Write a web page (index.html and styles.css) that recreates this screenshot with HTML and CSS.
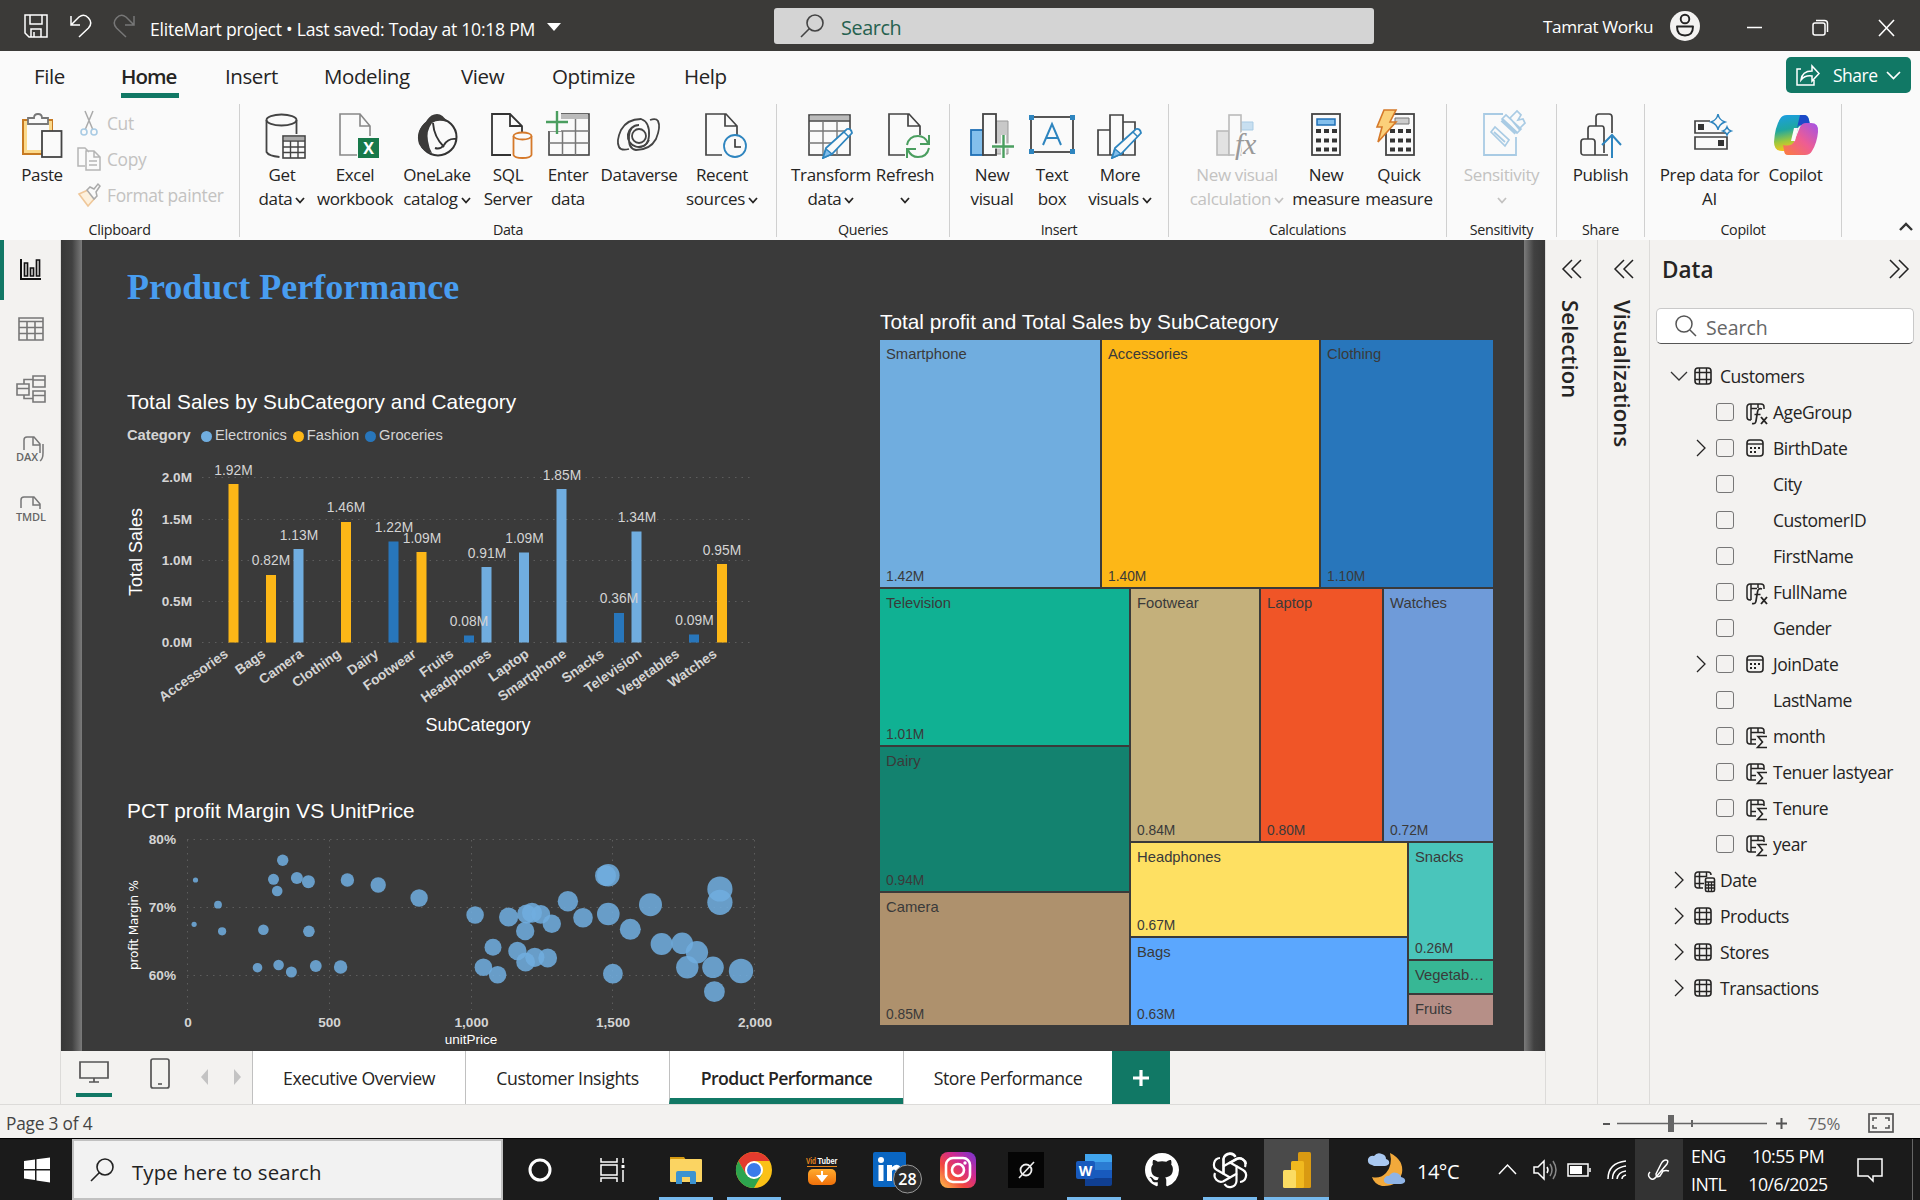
FILE: index.html
```html
<!DOCTYPE html>
<html lang="en">
<head>
<meta charset="utf-8">
<title>EliteMart project</title>
<link rel="stylesheet" href="styles.css">
</head>
<body>
<svg class="defs" width="0" height="0">
  <defs>
    <symbol id="chev" viewBox="0 0 10 7"><path d="M1 1l4 4.5L9 1" fill="none" stroke="currentColor" stroke-width="1.8"/></symbol>
    <symbol id="table" viewBox="0 0 18 18"><rect x="1" y="1" width="16" height="16" rx="3" fill="none" stroke="currentColor" stroke-width="1.6"/><path d="M5.5 1v16M12.5 1v16M1 5.5h16M1 12.5h16" fill="none" stroke="currentColor" stroke-width="1.4"/></symbol>
    <symbol id="right" viewBox="0 0 10 18"><path d="M1 1l8 8-8 8" fill="none" stroke="currentColor" stroke-width="1.3"/></symbol>
    <symbol id="cal" viewBox="0 0 18 18"><rect x="1" y="1" width="16" height="16" rx="3" fill="none" stroke="currentColor" stroke-width="1.6"/><path d="M1 5h16" stroke="currentColor" stroke-width="1.4"/><path d="M4 9h2M8 9h2M12 9h2M4 13h2M8 13h2" stroke="currentColor" stroke-width="2"/></symbol>
    <symbol id="calc" viewBox="0 0 22 22"><path d="M5 17H4a3 3 0 0 1-3-3V4a3 3 0 0 1 3-3h11a3 3 0 0 1 3 3v2M5 1v16M5 5.500h6M12 1v4" fill="none" stroke="currentColor" stroke-width="1.5"/><path d="M16 6q-4-1.500-4.500 3l-1.500 9q-.5 3.500-4 2.500M8.500 11.500h6" fill="none" stroke="currentColor" stroke-width="1.700"/><path d="M15 14l6 7M21 14l-6 7" stroke="currentColor" stroke-width="1.900"/></symbol>
    <symbol id="sigma" viewBox="0 0 22 22"><path d="M10 17H4a3 3 0 0 1-3-3V4a3 3 0 0 1 3-3h11a3 3 0 0 1 3 3v3M5 1v16M5 5.500h13M12 1v4M5 12.500h5" fill="none" stroke="currentColor" stroke-width="1.5"/><path d="M21 9.500H12l4.500 5.500-5 5.500H21" fill="none" stroke="currentColor" stroke-width="1.6"/></symbol>
    <symbol id="datecalc" viewBox="0 0 22 22"><path d="M9 17H4a3 3 0 0 1-3-3V4a3 3 0 0 1 3-3h10a3 3 0 0 1 3 3M5.500 1v16M12.500 1v5M1 5.500h12M1 12.500h9" fill="none" stroke="currentColor" stroke-width="1.5"/><rect x="11.500" y="7" width="9" height="13.500" rx="1.500" fill="none" stroke="currentColor" stroke-width="1.600"/><path d="M11 11h10M11 14h10M11 17h10M14.500 11v9M17.500 11v9" stroke="currentColor" stroke-width="1.300"/></symbol>
    <symbol id="pencil" viewBox="0 0 32 32"><path d="M1 31l3-10L25 2q4-1 5 4L10 27z" fill="#fafafa" stroke="#2e85bf" stroke-width="1.800"/><path d="M1 31l3-9 6 5z" fill="#83bfec" stroke="#2e85bf" stroke-width="1.500"/><path d="M22 5l5 5" stroke="#2e85bf" stroke-width="1.500"/></symbol>
    <symbol id="mag" viewBox="0 0 24 24"><circle cx="15" cy="9" r="8" fill="none" stroke="currentColor" stroke-width="1.600"/><path d="M9.500 14.500L1 23" stroke="currentColor" stroke-width="1.600"/></symbol>
    <linearGradient id="cpA" x1="0" y1="0" x2=".2" y2="1"><stop offset="0" stop-color="#1b9de8"/><stop offset=".45" stop-color="#1fa7a0"/><stop offset=".75" stop-color="#9cc83e"/><stop offset="1" stop-color="#f3c51d"/></linearGradient>
    <linearGradient id="cpB" x1="1" y1="0" x2="0" y2="1"><stop offset="0" stop-color="#a152e8"/><stop offset=".5" stop-color="#ee5d93"/><stop offset="1" stop-color="#fb7d3c"/></linearGradient>
    <linearGradient id="ig" x1="0" y1="1" x2="1" y2="0"><stop offset="0" stop-color="#fdc44a"/><stop offset=".35" stop-color="#f3473f"/><stop offset=".65" stop-color="#cf2a92"/><stop offset="1" stop-color="#7136d6"/></linearGradient>
    <linearGradient id="vt" x1="0" y1="0" x2="0" y2="1"><stop offset="0" stop-color="#ffab2e"/><stop offset="1" stop-color="#f0700a"/></linearGradient>
  </defs>
</svg>

<header class="titlebar">
  <svg class="save" width="24" height="24" viewBox="0 0 24 24"><path d="M1 1h22v22H5l-4-4zM6 1v9h12V1M7 23v-8h10v8M10 18v5" fill="none" stroke="#fff" stroke-width="1.500"/></svg>
  <svg class="undo" width="21" height="24" viewBox="0 0 21 24"><path d="M1 2v9h9M1 11L9 3q5-4 9.500 1t0 10L9 23" fill="none" stroke="#fff" stroke-width="1.500"/></svg>
  <svg class="redo" width="21" height="24" viewBox="0 0 21 24"><path d="M20 2v9h-9M20 11L12 3Q7-1 2.500 4t0 10L12 23" fill="none" stroke="#777" stroke-width="1.500"/></svg>
  <span class="doc">EliteMart project • Last saved: Today at 10:18 PM</span>
  <i class="caret"></i>
  <div class="top-search"><svg width="24" height="24"><use href="#mag"/></svg><span>Search</span></div>
  <span class="user">Tamrat Worku</span>
  <svg class="avatar" width="30" height="30" viewBox="0 0 30 30"><circle cx="15" cy="15" r="15" fill="#f3f2f1"/><circle cx="15" cy="8" r="4.300" fill="none" stroke="#222" stroke-width="1.900"/><path d="M7 15.500h16q0 9-8 9t-8-9z" fill="none" stroke="#222" stroke-width="1.900" stroke-linejoin="round"/></svg>
  <svg class="winbtns" width="150" height="20" viewBox="0 0 150 20"><path d="M1 9.500h15M133 2l15 16M148 2l-15 16" stroke="#fff" stroke-width="1.600"/><rect x="67" y="5" width="12" height="12" rx="2" fill="none" stroke="#fff" stroke-width="1.500"/><path d="M70 2.500h8.500q3 0 3 3V14" fill="none" stroke="#fff" stroke-width="1.500"/></svg>
</header>

<nav class="menu">
  <span class="m1">File</span><span class="m2 on">Home</span><span class="m3">Insert</span><span class="m4">Modeling</span><span class="m5">View</span><span class="m6">Optimize</span><span class="m7">Help</span>
  <button class="share"><svg width="25" height="22" viewBox="0 0 25 22"><path d="M5 5H1v16h17v-5M5 16q1-9 11-9V2l7 7.500-7 7.500v-5Q9 11 5 16z" fill="none" stroke="#fff" stroke-width="1.500"/></svg><span>Share</span><svg width="15" height="9" viewBox="0 0 15 9"><path d="M1 1l6.500 6.500L14 1" fill="none" stroke="#fff" stroke-width="1.700"/></svg></button>
</nav>

<section class="ribbon">
  <div class="group g-clip">
    <div class="tools">
      <div class="tool"><svg width="42" height="48" viewBox="0 0 42 48"><rect x="2" y="9" width="29" height="34" fill="#fafafa" stroke="#c77a22" stroke-width="2"/><rect x="4.500" y="11.500" width="25" height="29" fill="none" stroke="#fbd98b" stroke-width="3"/><path d="M7 13V7h6q0-4 4-4t4 4h6v6z" fill="#fafafa" stroke="#777" stroke-width="1.800"/><rect x="21" y="20" width="19.500" height="26" fill="#fafafa" stroke="#444" stroke-width="1.800"/></svg><span>Paste</span></div>
      <div class="mini">
        <div><svg width="24" height="26" viewBox="0 0 24 26"><path d="M8 1l8 19M16 1L8 20" stroke="#aaa" stroke-width="1.500"/><circle cx="7" cy="22" r="3" fill="none" stroke="#a9cbe4" stroke-width="1.600"/><circle cx="17" cy="22" r="3" fill="none" stroke="#a9cbe4" stroke-width="1.600"/></svg>Cut</div>
        <div><svg width="24" height="26" viewBox="0 0 24 26"><path d="M8 20H1V2h7l4 4M9 5h8l6 6v13H9zM17 5v6h6M12 15h8M12 19h8" fill="none" stroke="#b5b5b5" stroke-width="1.500"/></svg>Copy</div>
        <div><svg width="24" height="26" viewBox="0 0 24 26"><path d="M2 12l9-4 7 8-7 8z" fill="#fdf0dc" stroke="#efc79a" stroke-width="1.600"/><path d="M10 8l3-3 4 2 4-5 2 2-4 6 1 4-3 3z" fill="#fafafa" stroke="#aaa" stroke-width="1.500"/></svg>Format painter</div>
      </div>
    </div>
    <b>Clipboard</b>
  </div>
  <div class="group g-data">
    <div class="tools">
      <div class="tool nudge"><svg width="42" height="48" viewBox="0 0 42 48"><ellipse cx="16.500" cy="9" rx="15" ry="5.500" fill="none" stroke="#444" stroke-width="1.800"/><path d="M1.500 9v32q2 4 13 5M31.500 9v14" fill="none" stroke="#444" stroke-width="1.800"/><rect x="18" y="25" width="22" height="22" fill="#fafafa" stroke="#444" stroke-width="1.600"/><path d="M19 27.500h20" stroke="#aaa" stroke-width="3"/><path d="M18 30h22M18 36h22M18 41.500h22M25.500 30v17M33 30v17" stroke="#444" stroke-width="1.400"/></svg><span>Get</span><span>data <svg class="dn"><use href="#chev"/></svg></span></div>
      <div class="tool nudge"><svg width="42" height="48" viewBox="0 0 42 48"><path d="M19 44H2V3h20l10 12v10M22 3v12h10" fill="none" stroke="#888" stroke-width="1.600"/><rect x="20" y="27" width="21" height="20" fill="#17794a"/><text x="30.500" y="42.500" text-anchor="middle" font-family="Open Sans" font-weight="700" font-size="16" fill="#fff">X</text></svg><span>Excel</span><span>workbook</span></div>
      <div class="tool"><svg width="42" height="48" viewBox="0 0 42 48"><circle cx="22" cy="26" r="18.500" fill="#fafafa" stroke="#333" stroke-width="2"/><path d="M11 9Q15 3 21 3t10 8q-9-3-15 1-6 8-4 18 1 7 4 12Q7 41 3 33-1 20 10 11z" fill="#3b3a39"/><path d="M17 12q1 14 11 24M19 37q5 2 9-3 4-7 12-6" fill="none" stroke="#333" stroke-width="1.900"/></svg><span>OneLake</span><span>catalog <svg class="dn"><use href="#chev"/></svg></span></div>
      <div class="tool nudge"><svg width="42" height="48" viewBox="0 0 42 48"><path d="M20 44H1V3h18l12 12v6M19 3v12h12" fill="none" stroke="#333" stroke-width="1.800"/><path d="M22.500 25v19q1 3 9 3t9-3V25" fill="#fafafa" stroke="#d5792a" stroke-width="1.800"/><ellipse cx="31.500" cy="25" rx="9" ry="3.500" fill="#fafafa" stroke="#d5792a" stroke-width="1.800"/></svg><span>SQL</span><span>Server</span></div>
      <div class="tool"><svg width="44" height="48" viewBox="0 0 44 48"><rect x="3" y="3" width="40" height="41" fill="none" stroke="#444" stroke-width="1.600"/><path d="M4 5.500h38" stroke="#bbb" stroke-width="5"/><path d="M3 20h40M3 32h40M16.500 20v24M29.500 8v36" stroke="#777" stroke-width="1.500"/><path d="M0 2h15v18H0z" fill="#fafafa"/><path d="M11 0v23M0 11h22" stroke="#4a9e5f" stroke-width="2.400"/></svg><span>Enter</span><span>data</span></div>
      <div class="tool"><svg width="44" height="48" viewBox="0 0 44 48"><g fill="none" stroke="#444" stroke-width="1.800"><path d="M22 14a11 11 0 1 0 10 15M22 14q-9 0-10 11-1 13 7 14 14 0 20-11 5-12 2-18-2-3-8-1"/><path d="M22 36q9 0 10-11 1-14-8-17-14 0-20 11-5 11-2 17 2 4 10 2"/><circle cx="22" cy="25" r="7"/></g></svg><span>Dataverse</span></div>
      <div class="tool nudge"><svg width="42" height="48" viewBox="0 0 42 48"><path d="M17 44H1V3h20l11 12v9M20 3v12h12" fill="none" stroke="#444" stroke-width="1.700"/><circle cx="30" cy="35" r="11" fill="#fafafa" stroke="#2e85bf" stroke-width="1.800"/><path d="M30 28v8h6" fill="none" stroke="#333" stroke-width="1.600"/></svg><span>Recent</span><span>sources <svg class="dn"><use href="#chev"/></svg></span></div>
    </div>
    <b>Data</b>
  </div>
  <div class="group g-query">
    <div class="tools">
      <div class="tool"><svg width="46" height="48" viewBox="0 0 46 48"><rect x="1" y="4" width="41" height="40" fill="none" stroke="#444" stroke-width="1.600"/><path d="M2 7h39" stroke="#bbb" stroke-width="5"/><path d="M1 10h41" stroke="#444" stroke-width="1.500"/><path d="M1 20h41M1 32h30M15 10v34M29 10v34" stroke="#777" stroke-width="1.400"/><use href="#pencil" x="14" y="16" width="32" height="32"/></svg><span>Transform</span><span>data <svg class="dn"><use href="#chev"/></svg></span></div>
      <div class="tool nudge"><svg width="42" height="48" viewBox="0 0 42 48"><path d="M17 44H1V3h20l11 12v9M20 3v12h12" fill="none" stroke="#444" stroke-width="1.700"/><path d="M19 34q2-9 11-9 7 0 10 7M41 24v9h-9M41 37q-2 9-11 9-7 0-10-7M19 47v-9h9" fill="none" stroke="#4a9e5f" stroke-width="2"/></svg><span>Refresh</span><span><svg class="dn"><use href="#chev"/></svg></span></div>
    </div>
    <b>Queries</b>
  </div>
  <div class="group g-insert">
    <div class="tools">
      <div class="tool"><svg width="44" height="48" viewBox="0 0 44 48"><path d="M26 10h12v33H26z" fill="#c8c8c8" stroke="#999"/><rect x="1" y="19" width="12" height="25" fill="#83bfec" stroke="#1f6fb5" stroke-width="1.800"/><rect x="13" y="3" width="13" height="41" fill="#fafafa" stroke="#444" stroke-width="1.800"/><path d="M22 35h22M33.500 24v23" stroke="#fafafa" stroke-width="5"/><path d="M22 35.500h22M33.500 24v23" stroke="#4a9e5f" stroke-width="2.400"/></svg><span>New</span><span>visual</span></div>
      <div class="tool"><svg width="48" height="48" viewBox="0 0 48 48"><rect x="3" y="6" width="42" height="35" fill="none" stroke="#444" stroke-width="1.800"/><path d="M1 4h5v5H1zM42 4h5v5h-5zM1 38h5v5H1zM42 38h5v5h-5z" fill="#2e85bf"/><path d="M15 34l9-21 9 21M18 27h12" fill="none" stroke="#2e85bf" stroke-width="2"/></svg><span>Text</span><span>box</span></div>
      <div class="tool"><svg width="46" height="48" viewBox="0 0 46 48"><path d="M1 19h12v25H1zM13 4h13v40H13zM26 11h12v33H26z" fill="none" stroke="#444" stroke-width="1.700"/><use href="#pencil" x="14" y="16" width="32" height="32"/></svg><span>More</span><span>visuals <svg class="dn"><use href="#chev"/></svg></span></div>
    </div>
    <b>Insert</b>
  </div>
  <div class="group g-calc">
    <div class="tools">
      <div class="tool off"><svg width="42" height="48" viewBox="0 0 42 48"><path d="M25 11h12v8H25z" fill="#c8dff0" stroke="#a9cbe4"/><rect x="1" y="20" width="12" height="24" fill="#e2e2e2" stroke="#bbb" stroke-width="1.600"/><rect x="13" y="4" width="12" height="40" fill="#fafafa" stroke="#bbb" stroke-width="1.600"/><text x="19" y="43" font-family="Liberation Serif" font-style="italic" font-size="30" fill="#999" stroke="#fafafa" stroke-width="3" paint-order="stroke">fx</text></svg><span>New visual</span><span>calculation <svg class="dn"><use href="#chev"/></svg></span></div>
      <div class="tool"><svg width="30" height="48" viewBox="0 0 30 48"><rect x="1" y="3" width="28" height="41" fill="#fafafa" stroke="#444" stroke-width="1.800"/><rect x="6" y="8" width="18" height="6" fill="#83bfec" stroke="#1f6fb5" stroke-width="1.500"/><path d="M5 20h21M5 29.500h21M5 38.500h21" stroke="#333" stroke-width="4" stroke-dasharray="5 3"/></svg><span>New</span><span>measure</span></div>
      <div class="tool"><svg class="quick" width="40" height="50" viewBox="0 0 40 50"><rect x="11" y="5" width="28" height="41" fill="#fafafa" stroke="#444" stroke-width="1.800"/><path d="M20 9h14v6H20z" fill="#ccc" stroke="#777"/><path d="M15 22h21M15 31.500h21M15 40.500h21" stroke="#333" stroke-width="4" stroke-dasharray="5 3"/><path d="M9 1h12l-6 12h6L3 33l4-15H2z" fill="#fbd07a" stroke="#d5792a" stroke-width="1.600"/></svg><span>Quick</span><span>measure</span></div>
    </div>
    <b>Calculations</b>
  </div>
  <div class="group g-sens">
    <div class="tools">
      <div class="tool off sens"><svg width="42" height="48" viewBox="0 0 42 48"><path d="M20 3H1v41h32V26" fill="none" stroke="#a9cbe4" stroke-width="1.800"/><path d="M8 21l4-5 14 13-4 6zM11 21l11 10" fill="#fafafa" stroke="#a9cbe4" stroke-width="1.700"/><path d="M19 8l4-4 15 14-4 4zM27 7l7-7 4 4-3 5 5-1 2 4-6 6z" fill="#fafafa" stroke="#a9cbe4" stroke-width="1.700"/><path d="M19 9l14 13" stroke="#a9cbe4" stroke-width="4"/></svg><span>Sensitivity</span><span><svg class="dn"><use href="#chev"/></svg></span></div>
    </div>
    <b>Sensitivity</b>
  </div>
  <div class="group g-share">
    <div class="tools">
      <div class="tool"><svg width="42" height="48" viewBox="0 0 42 48"><path d="M1 31q0-3 3-3h8q3 0 3 3v13H4q-3 0-3-3zM8 28V18q0-3 2-3h12q2 0 2 3v24M16 15V6q0-3 3-3h10q3 0 3 3v16M15 44h13" fill="none" stroke="#444" stroke-width="1.700"/><path d="M32 47V25M22 34l10-10 9 10" fill="none" stroke="#2e85bf" stroke-width="2"/></svg><span>Publish</span></div>
    </div>
    <b>Share</b>
  </div>
  <div class="group g-cop">
    <div class="tools">
      <div class="tool nudge"><svg width="40" height="48" viewBox="0 0 40 48"><path d="M17 10H2v12h32v-3M2 26h32v12H2z" fill="none" stroke="#444" stroke-width="1.700"/><path d="M5 13h6v6H5zM25 29h6v6h-6z" fill="#333"/><path d="M25 3q1 6 7 8-6 2-7 8-1-6-7-8 6-2 7-8zM34 16q1 3 4 4-3 1-4 4-1-3-4-4 3-1 4-4z" fill="#fafafa" stroke="#2e85bf" stroke-width="1.500"/></svg><span>Prep data for</span><span>AI</span></div>
      <div class="tool"><svg width="46" height="48" viewBox="0 0 46 48"><path d="M14 4h17q4 0 5 5l1 5q-9-2-12 3l-5 18q-2 5-7 5H9q-8 0-8-9Q2 16 7 8q2-4 7-4z" fill="url(#cpA)"/><path d="M27 4h4q4 0 5 5l1 5h-9q-3 0-4 3z" fill="#1c49c8"/><path d="M32 44H15q-4 0-4-5l-1-5q8 2 11-3l6-15q2-4 6-4h5q8 0 7 9-1 11-6 19-2 4-7 4z" fill="url(#cpB)"/><path d="M25 17h-4l-3 13h4z" fill="#fafafa"/></svg><span>Copilot</span></div>
    </div>
    <b>Copilot</b>
  </div>
  <svg class="collapse" width="14" height="10" viewBox="0 0 14 10"><path d="M1 8l6-6 6 6" fill="none" stroke="#333" stroke-width="2.400"/></svg>
</section>

<main class="work">
  <aside class="rail">
    <div class="on"><svg width="24" height="24" viewBox="0 0 24 24"><path d="M2 2v20h20" fill="none" stroke="#111" stroke-width="2"/><path d="M5.500 6h3v13h-3zM11.500 11h3v8h-3zM17.500 3h3v16h-3z" fill="none" stroke="#111" stroke-width="1.700"/></svg></div>
    <div><svg width="26" height="24" viewBox="0 0 26 24"><path d="M1 1h24v22H1zM1 4.500h24M1 10.500h24M1 16.500h24M9 4v19M17 4v19" fill="none" stroke="#777" stroke-width="1.600"/></svg></div>
    <div><svg width="30" height="28" viewBox="0 0 30 28"><path d="M17 1h12v11H17zM17 16h12v11H17zM1 9h12v11H1zM17 5h12M17 20.500h12M1 13.500h12M8 9V4.500h9M8 20v3.500h9" fill="none" stroke="#777" stroke-width="1.600"/></svg></div>
    <div><svg width="30" height="26" viewBox="0 0 30 26"><path d="M8 14V4q0-3 3-3h7l6 7v9M17 1v8h7M27 8v9q0 6-3 8" fill="none" stroke="#777" stroke-width="1.500"/><text x="0" y="25" font-family="Open Sans" font-weight="600" font-size="11" fill="#666">DAX</text></svg></div>
    <div><svg width="30" height="26" viewBox="0 0 30 26"><path d="M5 12V4q0-3 3-3h10l6 7v5M17 1v8h7" fill="none" stroke="#777" stroke-width="1.500"/><text x="0" y="25" font-family="Open Sans" font-weight="600" font-size="11" fill="#666" textLength="30">TMDL</text></svg></div>
  </aside>

  <div class="stage">
    <div class="canvas">
      <div class="left-col">
        <h1>Product Performance</h1>
        <h2 class="t-bars">Total Sales by SubCategory and Category</h2>
        <div class="legend"><strong>Category</strong><i class="e"></i><span>Electronics</span><i class="f"></i><span>Fashion</span><i class="g"></i><span>Groceries</span></div>
        <svg class="bars" width="660" height="290" viewBox="120 455 660 290">
          <g class="grid"><path d="M202 477.500H752M202 519.500H752M202 560.500H752M202 601.500H752M202 642.500H752"/></g>
          <g class="ticks"><text x="192" y="482">2.0M</text><text x="192" y="524">1.5M</text><text x="192" y="565">1.0M</text><text x="192" y="606">0.5M</text><text x="192" y="647">0.0M</text></g>
          <path class="fa" d="M228.500 484h10v158.500h-10zM266 575h10v67.500h-10zM341 522h10v120.500h-10zM416.500 552h10v90.500h-10zM717 564h10v78.500h-10z"/>
          <path class="el" d="M293.500 549h10v93.500h-10zM481.500 567h10v75.500h-10zM519 552.500h10v90h-10zM556.500 489h10v153.500h-10zM631.500 531.500h10v111h-10z"/>
          <path class="gr" d="M388.500 541.500h10v101h-10zM464 635.500h10v7h-10zM614 613h10v29.500h-10zM689 634.500h10v8h-10z"/>
          <g class="vals"><text x="233.500" y="475">1.92M</text><text x="271" y="565">0.82M</text><text x="299" y="540">1.13M</text><text x="346" y="512">1.46M</text><text x="394" y="532">1.22M</text><text x="422" y="543">1.09M</text><text x="469" y="626">0.08M</text><text x="487" y="558">0.91M</text><text x="524.500" y="543">1.09M</text><text x="562" y="480">1.85M</text><text x="619" y="603">0.36M</text><text x="637" y="522">1.34M</text><text x="694.500" y="625">0.09M</text><text x="722" y="555">0.95M</text></g>
          <g class="cats">
            <text transform="translate(229 656) rotate(-35)">Accessories</text><text transform="translate(266.600 656) rotate(-35)">Bags</text><text transform="translate(304.200 656) rotate(-35)">Camera</text><text transform="translate(341.800 656) rotate(-35)">Clothing</text><text transform="translate(379.400 656) rotate(-35)">Dairy</text><text transform="translate(417 656) rotate(-35)">Footwear</text><text transform="translate(454.600 656) rotate(-35)">Fruits</text><text transform="translate(492.200 656) rotate(-35)">Headphones</text><text transform="translate(529.800 656) rotate(-35)">Laptop</text><text transform="translate(567.400 656) rotate(-35)">Smartphone</text><text transform="translate(605 656) rotate(-35)">Snacks</text><text transform="translate(642.600 656) rotate(-35)">Television</text><text transform="translate(680.200 656) rotate(-35)">Vegetables</text><text transform="translate(717.800 656) rotate(-35)">Watches</text>
          </g>
          <text class="axis" x="478" y="731" textLength="105">SubCategory</text>
          <text class="axis" transform="translate(142 552) rotate(-90)" textLength="88">Total Sales</text>
        </svg>
        <h2 class="t-scatter">PCT profit Margin VS UnitPrice</h2>
        <svg class="scatter" width="660" height="222" viewBox="120 828 660 222">
          <g class="grid"><path d="M187 839.500H755M187 907.500H755M187 975.500H755M187.500 840V1010M329.500 840V1010M471.500 840V1010M612.500 840V1010M754.500 840V1010"/></g>
          <g class="ticks"><text x="176" y="844">80%</text><text x="176" y="912">70%</text><text x="176" y="980">60%</text></g>
          <g class="ticks mid"><text x="188" y="1027">0</text><text x="329.500" y="1027">500</text><text x="471.500" y="1027">1,000</text><text x="613" y="1027">1,500</text><text x="755" y="1027">2,000</text></g>
          <g class="dots">
            <circle cx="282.700" cy="860.300" r="5.700"/><circle cx="195.500" cy="880" r="2.600"/><circle cx="273.500" cy="879.300" r="5.500"/><circle cx="277.200" cy="891" r="5.300"/><circle cx="296.900" cy="878" r="6"/><circle cx="308.400" cy="881.700" r="6.500"/><circle cx="347.400" cy="880" r="6.700"/><circle cx="378.200" cy="885" r="7.700"/><circle cx="419.100" cy="898" r="8.700"/><circle cx="218" cy="904.700" r="3.900"/>
            <circle cx="194.100" cy="924.300" r="2.600"/><circle cx="222.100" cy="931.300" r="4.100"/><circle cx="263.400" cy="929.700" r="5.300"/><circle cx="308.900" cy="931.300" r="5.800"/><circle cx="257.500" cy="967.700" r="4.800"/><circle cx="278.600" cy="965" r="5.300"/><circle cx="291.400" cy="972" r="5.500"/><circle cx="315.800" cy="966" r="5.900"/><circle cx="340.600" cy="967" r="6.700"/>
            <circle cx="475.100" cy="915" r="8.800"/><circle cx="493" cy="947.300" r="8.500"/><circle cx="508.600" cy="917" r="9.600"/><circle cx="525.200" cy="931" r="9.200"/><circle cx="517.400" cy="951" r="9.200"/><circle cx="483.400" cy="967.300" r="8.800"/><circle cx="497.600" cy="974.700" r="8.800"/><circle cx="526.500" cy="914" r="9.400"/><circle cx="532" cy="912.700" r="10"/><circle cx="540.800" cy="914.300" r="9.400"/><circle cx="551.800" cy="923.700" r="9.200"/>
            <circle cx="567.900" cy="901.300" r="10.200"/><circle cx="583" cy="917.700" r="9.800"/><circle cx="525.600" cy="962" r="9.400"/><circle cx="534.800" cy="957.300" r="9.600"/><circle cx="547.700" cy="958" r="9.400"/><circle cx="605.500" cy="875.700" r="10.500"/><circle cx="608.300" cy="875.300" r="11.300"/><circle cx="608.300" cy="914" r="11.300"/><circle cx="630.300" cy="929.300" r="10.500"/><circle cx="650.500" cy="904.700" r="11.500"/>
            <circle cx="661.600" cy="944" r="11"/><circle cx="682.200" cy="943.300" r="10.800"/><circle cx="696.900" cy="952.300" r="11.200"/><circle cx="687.300" cy="967.300" r="11.200"/><circle cx="713" cy="967.300" r="10.800"/><circle cx="741" cy="971" r="12.200"/><circle cx="714.400" cy="991.700" r="10.400"/><circle cx="612.900" cy="973.700" r="9.900"/><circle cx="719.900" cy="889" r="12.600"/><circle cx="719.900" cy="902.300" r="12.600"/>
          </g>
          <text class="axis small" x="471" y="1044">unitPrice</text>
          <text class="axis verd" transform="translate(138 925) rotate(-90)" textLength="90">profit Margin %</text>
        </svg>
      </div>
      <div class="right-col">
        <h2 class="t-tree">Total profit and Total Sales by SubCategory</h2>
        <div class="treemap">
          <div class="row r1">
            <div class="cell smartphone"><span>Smartphone</span><em>1.42M</em></div>
            <div class="cell accessories"><span>Accessories</span><em>1.40M</em></div>
            <div class="cell clothing"><span>Clothing</span><em>1.10M</em></div>
          </div>
          <div class="row r2">
            <div class="col c1">
              <div class="cell television"><span>Television</span><em>1.01M</em></div>
              <div class="cell dairy"><span>Dairy</span><em>0.94M</em></div>
              <div class="cell camera"><span>Camera</span><em>0.85M</em></div>
            </div>
            <div class="col c2">
              <div class="row r3">
                <div class="cell footwear"><span>Footwear</span><em>0.84M</em></div>
                <div class="cell laptop"><span>Laptop</span><em>0.80M</em></div>
                <div class="cell watches"><span>Watches</span><em>0.72M</em></div>
              </div>
              <div class="row r4">
                <div class="col c3">
                  <div class="cell headphones"><span>Headphones</span><em>0.67M</em></div>
                  <div class="cell bags"><span>Bags</span><em>0.63M</em></div>
                </div>
                <div class="col c4">
                  <div class="cell snacks"><span>Snacks</span><em>0.26M</em></div>
                  <div class="cell vegetables"><span>Vegetab…</span></div>
                  <div class="cell fruits"><span>Fruits</span></div>
                </div>
              </div>
            </div>
          </div>
        </div>
      </div>
    </div>
    <footer class="pages">
      <div class="views">
        <div class="desk"><svg width="30" height="22" viewBox="0 0 30 22"><path d="M1 1h28v16H1zM15 17v4M10 21h10" fill="none" stroke="#555" stroke-width="1.700"/></svg></div>
        <svg class="phone" width="20" height="31" viewBox="0 0 20 31"><rect x="1" y="1" width="18" height="29" rx="2" fill="none" stroke="#555" stroke-width="1.700"/><path d="M8 26h4" stroke="#555" stroke-width="1.600"/></svg>
        <i class="pv"></i><i class="nx"></i>
      </div>
      <div class="tab p1">Executive Overview</div>
      <div class="tab p2">Customer Insights</div>
      <div class="tab p3 on">Product Performance</div>
      <div class="tab p4">Store Performance</div>
      <div class="add"><svg width="16" height="16" viewBox="0 0 16 16"><path d="M8 0v16M0 8h16" stroke="#fff" stroke-width="3.200"/></svg></div>
    </footer>
  </div>

  <aside class="pane"><svg width="20" height="20" viewBox="0 0 20 20"><path d="M10 1l-9 9 9 9M19 1l-9 9 9 9" fill="none" stroke="#222" stroke-width="1.500"/></svg><span class="v1">Selection</span></aside>
  <aside class="pane"><svg width="20" height="20" viewBox="0 0 20 20"><path d="M10 1l-9 9 9 9M19 1l-9 9 9 9" fill="none" stroke="#222" stroke-width="1.500"/></svg><span class="v2">Visualizations</span></aside>
  <aside class="data">
    <div class="data-head"><span>Data</span><svg width="20" height="20" viewBox="0 0 20 20"><path d="M1 1l9 9-9 9M10 1l9 9-9 9" fill="none" stroke="#222" stroke-width="1.500"/></svg></div>
    <div class="data-search"><svg width="22" height="22" viewBox="0 0 22 22"><circle cx="9" cy="9" r="8" fill="none" stroke="#555" stroke-width="1.500"/><path d="M15 15l6 6" stroke="#555" stroke-width="1.500"/></svg><span>Search</span></div>
    <ul class="tree">
      <li class="top"><svg class="tw" viewBox="0 0 18 10"><path d="M1 1l8 8 8-8" fill="none" stroke="#333" stroke-width="1.300"/></svg><svg class="ic"><use href="#table" width="18" height="18"/></svg>Customers</li>
      <li><s></s><i></i><svg class="ic"><use href="#calc" width="22" height="22"/></svg>AgeGroup</li>
      <li><s><svg width="10" height="18"><use href="#right"/></svg></s><i></i><svg class="ic"><use href="#cal" width="18" height="18"/></svg>BirthDate</li>
      <li><s></s><i></i><svg class="ic"></svg>City</li>
      <li><s></s><i></i><svg class="ic"></svg>CustomerID</li>
      <li><s></s><i></i><svg class="ic"></svg>FirstName</li>
      <li><s></s><i></i><svg class="ic"><use href="#calc" width="22" height="22"/></svg>FullName</li>
      <li><s></s><i></i><svg class="ic"></svg>Gender</li>
      <li><s><svg width="10" height="18"><use href="#right"/></svg></s><i></i><svg class="ic"><use href="#cal" width="18" height="18"/></svg>JoinDate</li>
      <li><s></s><i></i><svg class="ic"></svg>LastName</li>
      <li><s></s><i></i><svg class="ic"><use href="#sigma" width="22" height="22"/></svg>month</li>
      <li><s></s><i></i><svg class="ic"><use href="#sigma" width="22" height="22"/></svg>Tenuer lastyear</li>
      <li><s></s><i></i><svg class="ic"><use href="#sigma" width="22" height="22"/></svg>Tenure</li>
      <li><s></s><i></i><svg class="ic"><use href="#sigma" width="22" height="22"/></svg>year</li>
      <li class="top"><svg class="tw r"><use href="#right" width="10" height="18"/></svg><svg class="ic"><use href="#datecalc" width="22" height="22"/></svg>Date</li>
      <li class="top"><svg class="tw r"><use href="#right" width="10" height="18"/></svg><svg class="ic"><use href="#table" width="18" height="18"/></svg>Products</li>
      <li class="top"><svg class="tw r"><use href="#right" width="10" height="18"/></svg><svg class="ic"><use href="#table" width="18" height="18"/></svg>Stores</li>
      <li class="top"><svg class="tw r"><use href="#right" width="10" height="18"/></svg><svg class="ic"><use href="#table" width="18" height="18"/></svg>Transactions</li>
    </ul>
  </aside>
</main>

<div class="status">
  <span>Page 3 of 4</span>
  <svg class="zoom" width="186" height="20" viewBox="0 0 186 20"><path d="M1 11h7" stroke="#555" stroke-width="2"/><path d="M15 10.500h150" stroke="#666" stroke-width="1.400"/><path d="M66 2h6v17h-6zM89 7h2v7h-2z" fill="#666"/><path d="M179.500 5v11M174 10.500h11" stroke="#555" stroke-width="2"/></svg>
  <span class="pct">75%</span>
  <svg width="26" height="20" viewBox="0 0 26 20"><rect x="1" y="1" width="24" height="18" fill="none" stroke="#555" stroke-width="1.700"/><path d="M5 8V5h4M17 5h4v3M21 12v3h-4M9 15H5v-3" fill="none" stroke="#555" stroke-width="1.600"/></svg>
</div>

<footer class="taskbar">
  <div class="start"><svg width="26" height="26" viewBox="0 0 26 26"><path d="M0 4l11-1.500V12H0zM12.500 2.300L26 .5V12H12.500zM0 13.500h11V23L0 21.500zM12.500 13.500H26V25.500l-13.500-2z" fill="#fff"/></svg></div>
  <div class="tb-search"><svg width="24" height="24"><use href="#mag"/></svg><span>Type here to search</span></div>
  <div class="app cort"><svg width="24" height="24" viewBox="0 0 24 24"><circle cx="12" cy="12" r="10" fill="none" stroke="#fff" stroke-width="3"/></svg></div>
  <div class="app tv"><svg width="26" height="24" viewBox="0 0 26 24"><path d="M1 0v4h16V0M1 24v-4h16v4M1 7h16v10H1zM23 0v5M23 12v12" fill="none" stroke="#fff" stroke-width="1.500"/><path d="M21.500 7h3v3h-3z" fill="#fff"/></svg></div>
  <div class="app run"><svg width="34" height="30" viewBox="0 0 34 30"><path d="M1 2h14l2 3H1z" fill="#d69a10"/><rect x="1" y="4" width="32" height="23" rx="1" fill="#fbd462"/><path d="M7 29V18q0-2 2-2h16q2 0 2 2v11h-6v-7h-8v7z" fill="#3c93d0"/></svg></div>
  <div class="app run"><svg width="36" height="36" viewBox="0 0 36 36"><circle cx="18" cy="18" r="18" fill="#fbc116"/><path d="M18 9h15.600A18 18 0 0 0 2.400 9l7.800 13.500z" fill="#e33b2e"/><path d="M2.400 9A18 18 0 0 0 18 36l7.800-13.500L18 27l-7.800-4.500z" fill="#2da44e"/><circle cx="18" cy="18" r="9" fill="#fff"/><circle cx="18" cy="18" r="7" fill="#3b7bea"/></svg></div>
  <div class="app"><svg width="36" height="36" viewBox="0 0 36 36"><g font-family="Liberation Sans" font-size="9" font-weight="700"><text x="2" y="12" fill="#e8871e" textLength="10" lengthAdjust="spacingAndGlyphs">Vid</text><text x="13.500" y="12" fill="#fff" textLength="20" lengthAdjust="spacingAndGlyphs">Tuber</text></g><path d="M3 14.500h30" stroke="#e8871e"/><rect x="4" y="17" width="28" height="16" rx="5" fill="url(#vt)"/><path d="M18 19v8M14 24l4 5 4-5z" stroke="#fff" stroke-width="2" fill="#fff"/></svg></div>
  <div class="app"><svg class="over" width="50" height="44" viewBox="0 0 50 44"><rect x="0" y="1" width="33" height="35" rx="2" fill="#0a66c2"/><circle cx="8" cy="9" r="3" fill="#fff"/><path d="M5.500 14h5v16h-5zM14 14h5v2q6-5 9 1v13h-5V20q-2-3-4 0v10h-5z" fill="#fff"/><circle cx="34.500" cy="28" r="14" fill="#2b2b2b" stroke="#999"/><text x="34.500" y="34" text-anchor="middle" font-family="Open Sans" font-size="16" font-weight="600" fill="#fff">28</text></svg></div>
  <div class="app"><svg width="36" height="36" viewBox="0 0 36 36"><rect width="36" height="36" rx="8" fill="url(#ig)"/><rect x="6" y="6" width="24" height="24" rx="7" fill="none" stroke="#fff" stroke-width="2.600"/><circle cx="18" cy="18" r="6" fill="none" stroke="#fff" stroke-width="2.600"/><circle cx="25" cy="11" r="1.700" fill="#fff"/></svg></div>
  <div class="app"><svg width="36" height="36" viewBox="0 0 36 36"><rect width="36" height="36" fill="#050505"/><circle cx="18" cy="18" r="5.500" fill="none" stroke="#eee" stroke-width="1.800"/><path d="M11 26L26 10" stroke="#eee" stroke-width="1.600"/></svg></div>
  <div class="app run"><svg width="36" height="36" viewBox="0 0 36 36"><path d="M9 2h25q2 0 2 2v6H9z" fill="#41a5ee"/><path d="M9 10h27v8H9z" fill="#2b7cd3"/><path d="M9 18h27v8H9z" fill="#185abd"/><path d="M9 26h27v6q0 2-2 2H9z" fill="#103f91"/><rect y="9" width="19" height="18" rx="2" fill="#185abd"/><text x="9.500" y="23.500" text-anchor="middle" font-family="Open Sans" font-size="14" font-weight="700" fill="#fff">W</text></svg></div>
  <div class="app"><svg width="34" height="34" viewBox="0 0 16 16"><path fill="#fff" d="M8 0C3.580 0 0 3.580 0 8c0 3.540 2.290 6.530 5.470 7.590.4.070.55-.17.55-.38 0-.19-.01-.82-.01-1.490-2.010.37-2.530-.49-2.690-.94-.09-.23-.48-.94-.82-1.130-.28-.15-.68-.52-.01-.53.63-.01 1.080.58 1.230.82.720 1.210 1.870.87 2.330.66.07-.52.28-.87.51-1.070-1.780-.2-3.640-.89-3.640-3.950 0-.87.31-1.590.82-2.150-.08-.2-.36-1.020.08-2.120 0 0 .67-.21 2.200.82.64-.18 1.320-.27 2-.27s1.360.09 2 .27c1.530-1.040 2.200-.82 2.200-.82.44 1.100.16 1.920.08 2.120.51.56.82 1.270.82 2.150 0 3.070-1.870 3.750-3.650 3.950.29.25.54.73.54 1.480 0 1.070-.01 1.930-.01 2.200 0 .21.15.46.55.38A8.010 8.010 0 0 0 16 8c0-4.420-3.580-8-8-8z"/></svg></div>
  <div class="app run"><svg width="36" height="36" viewBox="-18 -18 36 36"><g fill="none" stroke="#fff" stroke-width="2.200" stroke-linejoin="round"><path d="M-6.500 4V-9a6.500 6.500 0 0 1 12-4.500M-1 -6.500L7-11a6.500 6.500 0 0 1 9 5"/><path d="M0-7.500L6.500-3.800V3.800L0 7.500-6.500 3.800V-3.800z"/><path d="M-6.500-4v-6a6.500 6.500 0 0 1 12-3M0-7.500l7-4A6.500 6.500 0 0 1 15-3M6.500-3.800L13 0a6.500 6.500 0 0 1-3 12M6.500 3.800V11a6.500 6.500 0 0 1-12 3M0 7.500l-7 4A6.500 6.500 0 0 1-15 3M-6.500 3.800L-13 0a6.500 6.500 0 0 1 3-12"/></g></svg></div>
  <div class="app run pbi"><svg width="28" height="36" viewBox="0 0 28 36"><rect x="15" y="0" width="13" height="36" rx="1.500" fill="#d99a12"/><rect x="8" y="9" width="13" height="27" rx="1.500" fill="#f0b91f"/><rect x="0" y="18" width="13" height="18" rx="1.500" fill="#fbdc63"/></svg></div>
  <svg class="moon" width="38" height="34" viewBox="0 0 38 34"><path d="M22 0q14 7 12 20-4 14-20 13-8-2-10-9 8 2 14-4 7-8 4-20z" fill="#f2a93b"/><path d="M4 12q-5-1-4-6 2-4 6-3 3-4 8-2 4 1 4 5 4 1 3 5-2 2-4 2H6z" fill="#a9c8f0"/><path d="M20 31q-5-1-4-5 2-4 5-3 3-5 8-3 4 2 4 4 5 1 4 5-2 2-4 2z" fill="#8fb4e6"/></svg>
  <span class="temp">14°C</span>
  <svg class="tray" width="132" height="24" viewBox="0 0 132 24"><g fill="none" stroke="#fff" stroke-width="1.500"><path d="M1 16l8.500-9 8.500 9"/><path d="M36 9h4l6-6v18l-6-6h-4z"/><path d="M49 9q2 3 0 6"/><path d="M52 6q4 6 0 12M55 3q6 9 0 18" stroke="#888"/><rect x="70" y="6" width="20" height="12"/><path d="M92 10v4M110 21q0-16 18-18M114.500 21q0-11 13.500-13M119 21q1-7 9-8M124 21q0-3 4-4"/></g><path d="M72 8h12v8H72z" fill="#fff"/></svg>
  <div class="pen"><svg width="24" height="24" viewBox="0 0 24 24"><path d="M3 14q-3 3 0 6t6-1L20 6q2-4-1-4t-5 4L9 16q0 4 4 2l3-5q3-1 6 0" fill="none" stroke="#fff" stroke-width="1.500"/></svg></div>
  <div class="lang"><span>ENG</span><span>INTL</span></div>
  <div class="clock"><span>10:55 PM</span><span>10/6/2025</span></div>
  <svg class="note" width="26" height="26" viewBox="0 0 26 26"><path d="M1 2h24v17H16v5l-5-5H1z" fill="none" stroke="#fff" stroke-width="1.500"/></svg>
  <i class="peek"></i>
</footer>
</body>
</html>
```
FILE: styles.css
```css
* { box-sizing: border-box; }
body { margin: 0; width: 1920px; height: 1200px; overflow: hidden; display: flex; flex-direction: column; font-family: "Open Sans", "Noto Sans", sans-serif; color: #252423; background: #f3f2f0; white-space: nowrap; }
svg { display: block; flex: none; overflow: visible; }
.defs { position: absolute; }
h1, h2 { margin: 0; font-weight: 400; }

.titlebar { height: 51px; flex: none; background: #3b3a38; color: #fff; display: flex; align-items: center; padding-left: 24px; }
.undo { margin-left: 22px; }
.redo { margin-left: 23px; }
.doc { width: 389px; flex: none; margin: 6px 0 0 15px; font-size: 17.600px; letter-spacing: -0.25px; }
.caret { margin: 3px 0 0 8px; border: 7px solid transparent; border-top: 8px solid #fff; border-bottom: 0; }
.top-search { width: 600px; height: 36px; flex: none; margin-left: 213px; background: #d4d4d4; border-radius: 3px; display: flex; align-items: center; gap: 17px; padding-left: 26px; color: #444; }
.top-search span { margin-top: 3px; color: #26614f; font-size: 19.800px; letter-spacing: -0.4px; }
.user { width: 112px; flex: none; margin: 2px 0 0 169px; font-size: 17.200px; letter-spacing: -0.4px; }
.avatar { margin-left: 15px; }
.winbtns { margin: 4px 0 0 46px; }

.menu { height: 53px; flex: none; background: #fafafa; display: flex; font-size: 20.500px; letter-spacing: -0.4px; line-height: 50px; padding-left: 34px; }
.menu > span { flex: none; height: 47px; }
.m1 { width: 87px; } .m2 { width: 58px; margin-right: 46px; } .m3 { width: 99px; } .m4 { width: 137px; } .m5 { width: 91px; } .m6 { width: 132px; } .m7 { width: 1102px; }
.menu .on { font-weight: 600; border-bottom: 5px solid #117865; letter-spacing: -1px; }
.share { width: 125px; height: 36px; margin-top: 6px; border: 0; border-radius: 5px; background: #117865; color: #fff; font: 17.500px "Open Sans", sans-serif; letter-spacing: -0.500px; display: flex; align-items: center; padding: 0 0 0 10px; gap: 8px; }
.share span { margin-left: 4px; }

.ribbon { height: 136px; flex: none; background: #fafafa; display: flex; position: relative; padding-bottom: 3px; }
.group { border-right: 1px solid #d0d0d0; display: flex; flex-direction: column; flex: none; }
.group > b { font-weight: 400; font-size: 14.300px; letter-spacing: -0.3px; text-align: center; line-height: 20px; margin-top: auto; margin-bottom: -3px; }
.tools { display: grid; height: 112px; padding-top: 7px; }
.tool { display: flex; flex-direction: column; align-items: center; justify-content: flex-start; font-size: 17px; letter-spacing: -0.35px; line-height: 24px; }
.tool > svg { margin-bottom: 4px; }
.nudge > svg { margin-left: 7px; }
.sens > svg { margin-left: 5px; }
.tool .quick { margin: -2px 8px 4px 0; }
.tool span { display: flex; align-items: center; gap: 3px; height: 24px; justify-content: center; }
.tool span .dn { width: 10px; height: 7px; margin-top: 3px; }
.tool.off { color: #c3c2c1; }
.g-clip { width: 240px; } .g-clip .tools { grid-template-columns: 42px 160px; padding-left: 21px; column-gap: 14px; }
.mini { display: grid; grid-template-rows: repeat(3, 36px); align-items: center; margin-top: -6px; font-size: 17.400px; letter-spacing: -0.35px; color: #c3c2c1; }
.mini div { display: flex; align-items: center; gap: 6px; }
.g-data { width: 537px; } .g-data .tools { grid-template-columns: 74px 72px 92px 50px 70px 72px 94px; padding-left: 5px; }
.g-query { width: 173px; } .g-query .tools { grid-template-columns: 90px 58px; padding-left: 9px; }
.g-insert { width: 219px; } .g-insert .tools { grid-template-columns: 58px 62px 74px; padding-left: 13px; }
.g-calc { width: 278px; } .g-calc .tools { grid-template-columns: 102px 76px 70px; padding-left: 17px; }
.g-sens { width: 110px; } .g-share { width: 88px; }
.g-cop { width: 197px; } .g-cop .tools { grid-template-columns: 117px 55px; padding-left: 6px; }
.collapse { position: absolute; left: 1899px; top: 118px; }

.work { height: 865px; flex: none; display: flex; border-bottom: 1px solid #dcdbd9; }
.rail { width: 61px; flex: none; display: grid; grid-template-rows: repeat(5, 60px); border-right: 1px solid #dcdbd9; background: #f3f2f0; }
.rail div { display: flex; align-items: center; justify-content: center; border-left: 4px solid transparent; padding: 0 3px 3px 0; }
.rail .on { border-left-color: #117865; }
.stage { width: 1484px; flex: none; display: flex; flex-direction: column; }
.canvas { height: 811px; flex: none; display: flex; padding-left: 66px; background: linear-gradient(90deg, #373737 0, #414141 11px, #7b7b7b 21px, #3a3a3a 21px, #3a3a3a 1463px, #7b7b7b 1463px, #414141 1473px, #373737 1484px); font-family: "Liberation Sans", Arial, sans-serif; }
.left-col { width: 753px; flex: none; }
h1 { font: 700 36px/40px "Liberation Serif", serif; color: #489df0; padding-top: 27px; }
h2 { color: #fff; font-size: 20.800px; line-height: 24px; }
.t-bars { margin-top: 83px; height: 24px; letter-spacing: 0.05px; }
.legend { display: flex; align-items: center; height: 20px; margin-top: 11px; color: #d4d4d4; font-size: 14.700px; }
.legend strong { width: 74px; }
.legend i { width: 11px; height: 11px; border-radius: 50%; margin-right: 3px; margin-top: 2px; }
.legend span { margin-right: 6px; }
.legend .e { background: #70addf; } .legend .f { background: #fdb717; } .legend .g { background: #2876bb; }
.bars { margin: 10px 0 0 -7px; }
.grid { fill: none; stroke: #5d5d5d; stroke-width: 1; stroke-dasharray: 1.500 5; }
.ticks { font-size: 13.600px; font-weight: 700; fill: #d4d4d4; text-anchor: end; }
.ticks.mid { text-anchor: middle; }
.fa { fill: #fdb717; } .el { fill: #70addf; } .gr { fill: #2876bb; }
.vals { font-size: 13.800px; fill: #d4d4d4; text-anchor: middle; }
.cats { font-size: 13.700px; font-weight: 700; fill: #d4d4d4; text-anchor: end; }
.axis { font-size: 18px; fill: #fff; text-anchor: middle; }
.small { font-size: 13.500px; }
.verd { font: 12px "DejaVu Sans", sans-serif; }
.t-scatter { margin-top: 54px; height: 24px; letter-spacing: 0.05px; }
.scatter { margin: 5px 0 0 -7px; }
.dots { fill: #70addf; fill-opacity: .86; }
.right-col { width: 613px; }
.t-tree { padding-top: 70px; height: 100px; }
.treemap { width: 613px; height: 685px; display: grid; grid-template-rows: 247px 436px; gap: 2px; }
.row, .col { display: grid; gap: 2px; min-width: 0; min-height: 0; }
.r1 { grid-template-columns: 220px 217px 172px; }
.r2 { grid-template-columns: 249px 362px; }
.c1 { grid-template-rows: 156px 144px 132px; }
.c2 { grid-template-rows: 252px 182px; }
.r3 { grid-template-columns: 128px 121px 109px; }
.r4 { grid-template-columns: 276px 84px; }
.c3 { grid-template-rows: 93px 87px; }
.c4 { grid-template-rows: 116px 32px 30px; }
.cell { padding: 6px 0 3px 6px; display: flex; flex-direction: column; justify-content: space-between; color: #3a3a3a; font-size: 14.800px; line-height: 17px; overflow: hidden; }
.cell em { font-style: normal; font-size: 13.800px; line-height: 15px; }
.smartphone { background: #70addf; } .accessories { background: #fdb717; } .clothing { background: #2876bb; }
.television { background: #10b193; } .dairy { background: #13826f; } .camera { background: #ae916d; }
.footwear { background: #c4b07b; } .laptop { background: #f05527; } .watches { background: #6f9bd9; }
.headphones { background: #fee062; } .bags { background: #5ba7fe; } .snacks { background: #4ac5bb; } .vegetables { background: #37b795; } .fruits { background: #b68f87; }

.pages { height: 53px; display: flex; flex: none; font-size: 17.700px; letter-spacing: -0.4px; }
.views { width: 191px; display: flex; align-items: flex-start; padding-left: 15px; }
.desk { width: 36px; height: 46px; border-bottom: 4px solid #117865; padding: 10px 0 0 3px; }
.phone { margin: 7px 0 0 38px; }
.views i { border: 8px solid transparent; margin-top: 18px; }
.views .pv { border-left: 0; border-right: 7px solid #c3c3c3; margin-left: 31px; }
.views .nx { border-right: 0; border-left: 7px solid #c3c3c3; margin-left: 26px; }
.tab { background: #fff; border-left: 1px solid #c0c0c0; display: flex; align-items: center; justify-content: center; padding-top: 1px; }
.tab.on { font-weight: 600; border-bottom: 6px solid #117865; padding-top: 7px; letter-spacing: -0.6px; }
.p1 { width: 213px; } .p2 { width: 204px; } .p3 { width: 234px; } .p4 { width: 209px; }
.add { width: 58px; background: #117865; display: flex; align-items: center; justify-content: center; }

.pane { width: 52px; flex: none; border-left: 1px solid #dcdbd9; padding: 19px 0 0 16px; }
.pane span { display: block; writing-mode: vertical-rl; font-weight: 600; font-size: 22px; line-height: 24px; margin: 21px 0 0 -3px; }
.v1 { letter-spacing: 0.2px; } .v2 { letter-spacing: 0.1px; }
.data { width: 271px; flex: none; border-left: 1px solid #dcdbd9; padding-right: 6px; }
.data-head { display: flex; justify-content: space-between; align-items: center; height: 58px; padding: 0 5px 0 12px; font-size: 22.500px; font-weight: 600; }
.data-search { height: 36px; margin: 10px 0 0 6px; border: 1px solid #c9c9c9; border-bottom: 1.500px solid #555; border-radius: 5px; background: #fff; color: #666; display: flex; align-items: center; gap: 9px; padding-left: 18px; font-size: 19.500px; }
.data-search span { margin-top: 2px; }
.tree { list-style: none; margin: 14px 0 0; padding: 0; font-size: 17.500px; letter-spacing: -0.45px; }
.tree li { display: flex; align-items: center; height: 36px; padding-left: 46px; }
.tree .top { padding-left: 20px; }
.tree s { width: 20px; }
.tree i { width: 18px; height: 18px; border: 1px solid #777; border-radius: 3px; margin-right: 12px; }
.tree .ic { width: 27px; height: 18px; }
.tree .tw { width: 18px; height: 10px; margin-right: 6px; }
.tree .top .ic { width: 26px; }
.tree .r { width: 14px; height: 18px; margin: 0 6px 0 4px; }

.status { height: 34px; flex: none; display: flex; align-items: center; padding: 3px 26px 0 6px; font-size: 17.300px; letter-spacing: -0.2px; color: #444; border-bottom: 1px solid #000; }
.zoom { margin-left: auto; }
.pct { margin: 0 28px 0 20px; color: #666; font-size: 16.800px; letter-spacing: -0.3px; }

.taskbar { height: 61px; flex: none; background: #1b1b1b; display: flex; align-items: center; color: #fff; }
.start { width: 72px; padding-left: 24px; }
.tb-search { width: 431px; height: 61px; flex: none; border: 2px solid #c1c1c1; background: #f2f2f2; color: #222; display: flex; align-items: center; gap: 18px; padding-left: 16px; font-size: 20.400px; letter-spacing: 0; }
.tb-search span { margin-top: 4px; width: 200px; white-space: nowrap; letter-spacing: 0.1px; }
.app { width: 68px; height: 61px; display: flex; align-items: center; justify-content: center; flex: none; }
.cort { width: 74px; } .tv { width: 75px; padding-right: 4px; }
.over { margin: 7px 0 0 16px; }
.run { background: linear-gradient(#76b9ed, #76b9ed) center bottom / 54px 3px no-repeat; }
.pbi { width: 65px; background: linear-gradient(#76b9ed, #76b9ed) center bottom / 65px 3px no-repeat, #4a4a4a; }
.moon { margin-left: 39px; }
.temp { width: 92px; flex: none; padding-left: 11px; font-size: 20px; letter-spacing: -0.500px; padding-top: 3px; }
.tray { margin: 0 5px 0 0; }
.pen { width: 48px; height: 61px; background: #333; display: flex; align-items: center; justify-content: center; flex: none; }
.lang, .clock { display: grid; grid-template-rows: 28px 28px; align-items: center; font-size: 17.700px; letter-spacing: -0.500px; flex: none; }
.lang { margin-left: 8px; width: 54px; }
.clock { width: 86px; text-align: center; }
.note { margin-left: 26px; }
.peek { width: 1px; height: 61px; background: #666; margin-left: 29px; }
```
